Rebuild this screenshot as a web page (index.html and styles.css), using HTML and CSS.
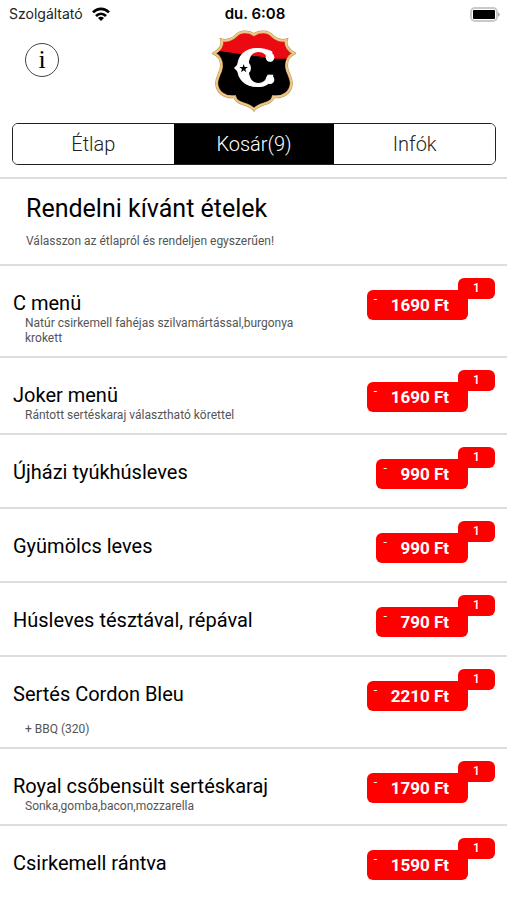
FILE: index.html
```html
<!DOCTYPE html>
<html lang="hu">
<head>
<meta charset="utf-8">
<meta name="viewport" content="width=device-width, initial-scale=1">
<title>Kosár</title>
<link rel="stylesheet" href="styles.css">
</head>
<body>
<div class="status">
  <div class="carrier">
    <span>Szolgáltató</span>
    <svg class="wifi" viewBox="0 0 54 42" aria-hidden="true">
      <g fill="none" stroke="#000" stroke-width="8">
        <path d="M3 16C17 2 37 2 51 16"/>
        <path d="M12 27C21 18 33 18 42 27"/>
      </g>
      <path d="M27 42L18 33C23 28 31 28 36 33Z"/>
    </svg>
  </div>
  <div class="clock">du. 6:08</div>
  <svg class="battery" viewBox="0 0 31 15" aria-hidden="true">
    <rect x="1" y="1" width="26" height="13" rx="4" fill="#fff" stroke="#c9c9c9" stroke-width="2"/>
    <rect x="3" y="3" width="22" height="9" rx="1"/>
    <path d="M28 5L30 7.5L28 10Z" fill="#aaa"/>
  </svg>
</div>
<header class="top">
  <button class="info" type="button" aria-label="Információ">i</button>
  <svg class="logo" viewBox="14 10 252 246" aria-hidden="true">
    <defs>
      <path id="shield" d="M140 24C124 13 98 13 86 27C76 38 58 44 43 40C48 56 36 72 20 80C36 87 44 104 42 122C41 138 28 150 28 170C29 196 52 214 82 210C88 236 122 226 140 249C158 226 192 236 198 210C228 214 251 196 252 170C252 150 239 138 238 122C236 104 244 87 260 80C244 72 232 56 237 40C222 44 204 38 194 27C182 13 156 13 140 24Z"/>
      <clipPath id="shield-clip"><use href="#shield"/></clipPath>
    </defs>
    <use href="#shield"/>
    <path d="M0 0H280V96H200L30 72L0 70Z" fill="#ec0a12" clip-path="url(#shield-clip)"/>
    <use href="#shield" fill="none" stroke="#b98b43" stroke-width="9"/>
    <use href="#shield" fill="none" stroke="#ecc98b" stroke-width="6"/>
    <path d="M80 124L106 98V150Z" fill="#fff"/>
    <circle cx="110" cy="124" r="21" fill="#fff"/>
    <text class="logo-letter" x="144" y="178" text-anchor="middle">C</text>
    <circle cx="188" cy="92" r="13" fill="#fff"/>
    <circle cx="188" cy="159" r="13" fill="#fff"/>
    <path d="M109 112L112 121H122L114 127L117 137L109 131L101 137L104 127L96 121H106Z"/>
  </svg>
</header>
<nav class="tabs">
  <button type="button">Étlap</button>
  <button type="button" class="active" aria-current="page">Kosár(9)</button>
  <button type="button">Infók</button>
</nav>
<main>
  <div class="heading">
    <h1>Rendelni kívánt ételek</h1>
    <p>Válasszon az étlapról és rendeljen egyszerűen!</p>
  </div>
  <ul class="items">
    <li>
      <div class="dish"><h2>C menü</h2><p>Natúr csirkemell fahéjas szilvamártással,burgonya krokett</p></div>
      <button class="price" type="button"><span class="minus">-</span>1690 Ft<span class="count">1</span></button>
    </li>
    <li>
      <div class="dish"><h2>Joker menü</h2><p>Rántott sertéskaraj választható körettel</p></div>
      <button class="price" type="button"><span class="minus">-</span>1690 Ft<span class="count">1</span></button>
    </li>
    <li>
      <div class="dish"><h2>Újházi tyúkhúsleves</h2></div>
      <button class="price" type="button"><span class="minus">-</span>990 Ft<span class="count">1</span></button>
    </li>
    <li>
      <div class="dish"><h2>Gyümölcs leves</h2></div>
      <button class="price" type="button"><span class="minus">-</span>990 Ft<span class="count">1</span></button>
    </li>
    <li>
      <div class="dish"><h2>Húsleves tésztával, répával</h2></div>
      <button class="price" type="button"><span class="minus">-</span>790 Ft<span class="count">1</span></button>
    </li>
    <li>
      <div class="dish"><h2>Sertés Cordon Bleu</h2><p class="extra">+ BBQ (320)</p></div>
      <button class="price" type="button"><span class="minus">-</span>2210 Ft<span class="count">1</span></button>
    </li>
    <li>
      <div class="dish"><h2>Royal csőbensült sertéskaraj</h2><p>Sonka,gomba,bacon,mozzarella</p></div>
      <button class="price" type="button"><span class="minus">-</span>1790 Ft<span class="count">1</span></button>
    </li>
    <li>
      <div class="dish"><h2>Csirkemell rántva</h2></div>
      <button class="price" type="button"><span class="minus">-</span>1590 Ft<span class="count">1</span></button>
    </li>
  </ul>
</main>
</body>
</html>
```
FILE: styles.css
```css
* {
  box-sizing: border-box;
}

body,
h1,
h2,
p,
ul {
  margin: 0;
  padding: 0;
}

body {
  background: #fff;
  color: #000;
  font-family: Roboto, sans-serif;
}

button {
  font-family: inherit;
  margin: 0;
  padding: 0;
}

.status {
  display: grid;
  grid-template-columns: 1fr auto 1fr;
  align-items: center;
  height: 28px;
  padding: 0 6px 0 9px;
  font: 14px/20px Inter, sans-serif;
}

.carrier {
  display: flex;
  align-items: center;
  gap: 9px;
  color: #222;
}

.wifi {
  width: 18px;
  height: 14px;
}

.clock {
  font-size: 15px;
  font-weight: 600;
}

.battery {
  justify-self: end;
  width: 31px;
  height: 15px;
}

.top {
  display: grid;
  grid-template-columns: 1fr auto 1fr;
  align-items: start;
  padding: 2px 25px 0;
}

.info {
  width: 34px;
  height: 34px;
  margin-top: 13px;
  border: 1px solid #444;
  border-radius: 50%;
  background: #fff;
  color: #000;
  font: 26px/30px "Liberation Serif", serif;
}

.logo {
  display: block;
  width: 84px;
  height: 82px;
}

.logo-letter {
  font: bold 150px "DejaVu Serif", serif;
  fill: #fff;
  stroke: #fff;
  stroke-width: 3px;
  stroke-linejoin: round;
}

.tabs {
  display: grid;
  grid-template-columns: repeat(3, 1fr);
  margin: 11px 11px 12px 12px;
  border: 1px solid #222;
  border-radius: 6px;
  overflow: hidden;
}

.tabs button {
  height: 40px;
  border: 0;
  background: #fff;
  color: #222;
  font-size: 20px;
  font-weight: 300;
}

.tabs .active {
  background: #000;
  color: #fff;
}

.heading {
  padding: 14px 26px 15px;
  border-top: 2px solid #ddd;
  border-bottom: 2px solid #ddd;
}

.heading h1 {
  font-size: 25px;
  line-height: 32px;
  font-weight: 400;
}

.heading p {
  margin-top: 9px;
}

.heading p,
.dish p {
  color: #555;
  font-size: 12px;
  line-height: 15px;
  font-weight: 400;
}

.items {
  list-style: none;
}

.items li {
  display: flex;
  justify-content: space-between;
  align-items: flex-start;
  min-height: 74px;
  padding: 24px 39px 10px 13px;
  border-bottom: 2px solid #ddd;
}

.items li:last-child {
  border-bottom: 0;
}

.dish {
  max-width: 300px;
}

.dish h2 {
  font-size: 20px;
  line-height: 26px;
  font-weight: 400;
}

.dish p {
  padding-left: 12px;
}

.dish .extra {
  padding-top: 15px;
}

.price {
  position: relative;
  height: 30px;
  padding: 0 19px 0 24px;
  border: 0;
  border-radius: 6px;
  background: #f00;
  color: #fff;
  font-size: 17px;
  font-weight: 700;
}

.minus {
  position: absolute;
  left: 7px;
  top: 2px;
  font-size: 12px;
  line-height: 15px;
  font-weight: 400;
}

.count {
  position: absolute;
  right: -27px;
  top: -12px;
  width: 37px;
  border-radius: 6px;
  background: #f00;
  font-size: 12px;
  line-height: 21px;
  font-weight: 500;
}
```
